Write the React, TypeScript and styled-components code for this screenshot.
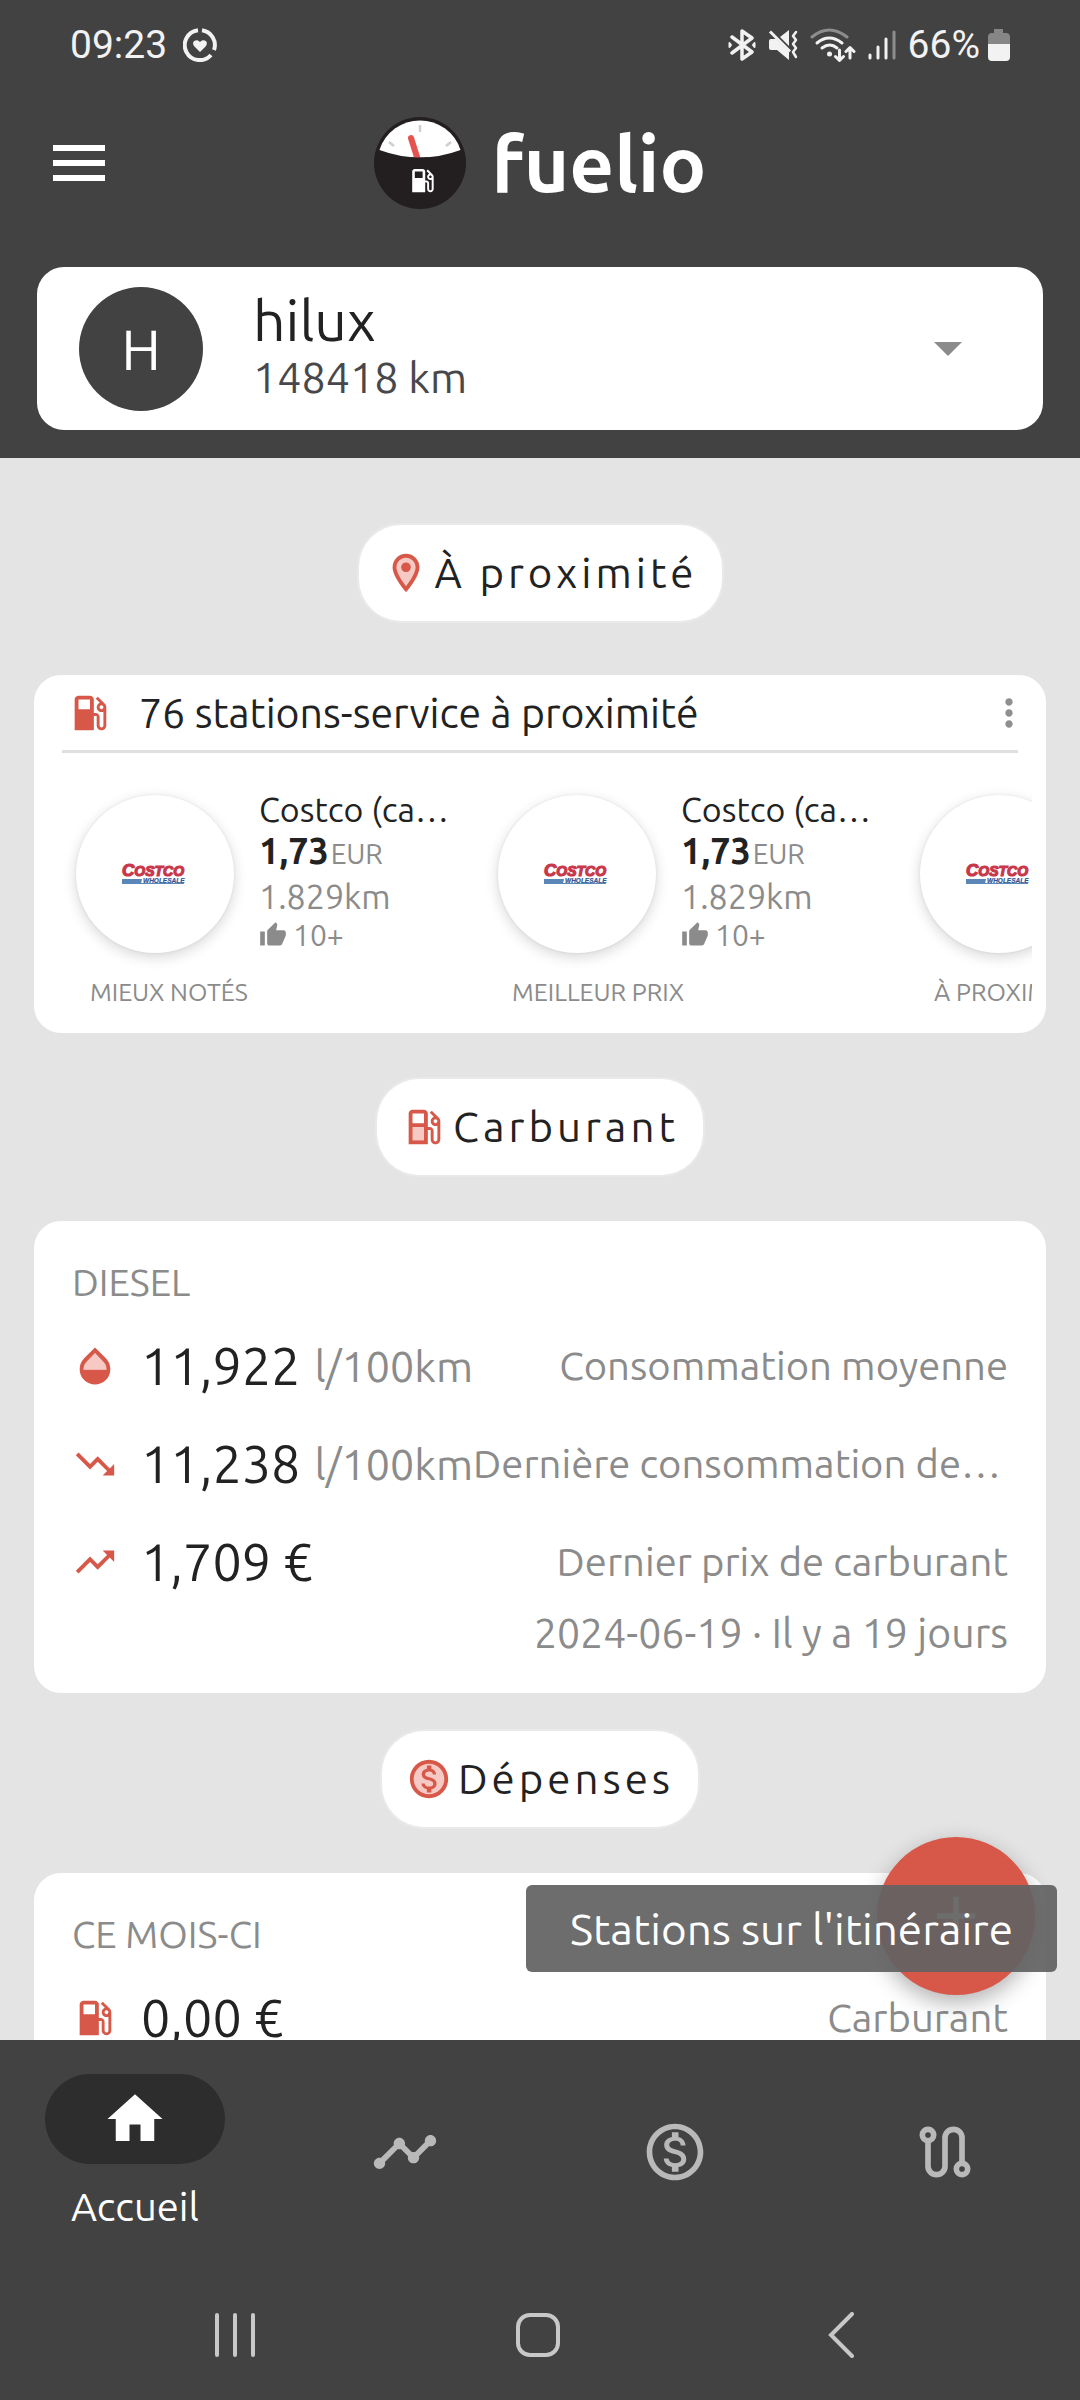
import React from "react";
import styled, { createGlobalStyle } from "styled-components";
import {
  MdAdd,
  MdHome,
  MdMoreVert,
  MdOutlineMonetizationOn,
  MdThumbUp,
  MdTimeline,
  MdTrendingDown,
  MdTrendingUp,
} from "react-icons/md";

const color = {
  dark: "#424242",
  darker: "#2d2d2d",
  page: "#e4e4e4",
  card: "#ffffff",
  ink: "#222222",
  muted: "#8b8b8b",
  accent: "#d75848",
  accentSoft: "#f6c9c4",
  navIcon: "#b9b9b9",
};

const GlobalStyle = createGlobalStyle`
  *, *::before, *::after { box-sizing: border-box; }
  body {
    margin: 0;
    background: ${color.dark};
    font-family: Ubuntu, "Noto Sans", "Open Sans", sans-serif;
    color: ${color.ink};
  }
  button { font: inherit; color: inherit; border: 0; padding: 0; background: none; cursor: pointer; }
  h1, h2, h3, p, ul { margin: 0; padding: 0; font-weight: 400; list-style: none; }
  svg { display: block; flex: none; }
`;

const Screen = styled.div`
  display: flex;
  flex-direction: column;
  height: 100vh;
  background: ${color.page};
`;

/* ---------- top ---------- */

const TopArea = styled.header`
  flex: none;
  padding-bottom: 28px;
  background: ${color.dark};
`;

const StatusBar = styled.div`
  display: flex;
  align-items: center;
  justify-content: space-between;
  height: 90px;
  padding: 0 70px;
  font-family: Roboto, sans-serif;
  font-size: 39px;
  line-height: 44px;
  color: #f2f2f2;
`;

const StatusGroup = styled.div<{ $gap: number }>`
  display: flex;
  align-items: center;
  gap: ${(p) => p.$gap}px;
`;

const Charge = styled.span`
  display: flex;
  align-items: center;
  gap: 8px;
`;

const TitleBar = styled.div`
  display: grid;
  grid-template-columns: 1fr auto 1fr;
  align-items: center;
  height: 146px;
  padding: 0 53px;
`;

const MenuButton = styled.button`
  justify-self: start;
`;

const Brand = styled.h1`
  display: flex;
  align-items: center;
  gap: 26px;
  font-size: 78px;
  line-height: 94px;
  font-weight: 700;
  color: #ffffff;
`;

const VehiclePicker = styled.button`
  display: flex;
  align-items: center;
  gap: 50px;
  width: calc(100% - 74px);
  height: 163px;
  margin: 31px 37px 0;
  padding: 0 81px 0 42px;
  border-radius: 27px;
  background: ${color.card};
  text-align: left;
`;

const Avatar = styled.span`
  display: grid;
  place-items: center;
  flex: none;
  width: 124px;
  height: 124px;
  border-radius: 50%;
  background: ${color.dark};
  font-size: 57px;
  line-height: 64px;
  color: #ffffff;
`;

const VehicleText = styled.span`
  display: flex;
  flex-direction: column;
  flex: 1;
  padding-bottom: 6px;
`;

const VehicleName = styled.span`
  font-size: 57px;
  line-height: 62px;
`;

const Odometer = styled.span`
  font-size: 43px;
  line-height: 52px;
  color: #48484c;
`;

/* ---------- content ---------- */

const Stage = styled.div`
  position: relative;
  flex: 1;
  min-height: 0;
`;

const Content = styled.main`
  height: 100%;
  overflow: hidden;
  padding: 67px 34px 0;
`;

const Section = styled.section<{ $gap: number; $after: number }>`
  display: flex;
  flex-direction: column;
  gap: ${(p) => p.$gap}px;
  margin-bottom: ${(p) => p.$after}px;
`;

const Chip = styled.h2`
  display: flex;
  align-items: center;
  align-self: center;
  gap: 6px;
  height: 96px;
  padding: 0 24px;
  border-radius: 42px;
  background: ${color.card};
  box-shadow: 0 0 0 2px #e9e9e9;
  font-size: 42px;
  line-height: 56px;
  letter-spacing: 4px;
`;

const Card = styled.div`
  border-radius: 27px;
  background: ${color.card};
`;

const NearbyHead = styled.div`
  display: flex;
  align-items: center;
  gap: 26px;
  height: 75px;
  padding: 0 15px 0 33px;
`;

const NearbyTitle = styled.h3`
  flex: 1;
  font-size: 41px;
  line-height: 52px;
`;

const Rule = styled.hr`
  height: 3px;
  margin: 0 28px;
  border: 0;
  background: #e0e0e0;
`;

const StationList = styled.ul`
  display: flex;
  margin: 0 14px;
  padding: 35px 0 19px 28px;
  overflow: hidden;
`;

const Station = styled.li`
  display: grid;
  grid-template-columns: 158px 196px;
  column-gap: 25px;
  flex: none;
  width: 422px;
`;

const StationBadge = styled.div`
  display: grid;
  place-items: center;
  width: 158px;
  height: 158px;
  margin-top: 7px;
  border-radius: 50%;
  background: ${color.card};
  box-shadow: 0 4px 14px rgba(0, 0, 0, 0.16), 0 0 3px rgba(0, 0, 0, 0.08);
`;

const StationInfo = styled.div`
  display: flex;
  flex-direction: column;
  font-size: 34px;
  line-height: 42px;
  color: ${color.muted};
`;

const StationName = styled.p`
  overflow: hidden;
  text-overflow: ellipsis;
  white-space: nowrap;
  color: ${color.ink};
`;

const Price = styled.p`
  display: flex;
  align-items: baseline;
  gap: 2px;
`;

const Amount = styled.strong`
  font-size: 36px;
  color: ${color.ink};
`;

const Currency = styled.span`
  font-size: 28px;
`;

const Likes = styled.p`
  display: flex;
  align-items: center;
  gap: 6px;
  font-size: 30px;
  line-height: 36px;
`;

const StationKind = styled.p`
  grid-column: 1 / -1;
  margin-top: 17px;
  padding-left: 14px;
  font-size: 25px;
  line-height: 44px;
  white-space: nowrap;
  color: ${color.muted};
`;

const StatsCard = styled(Card)`
  padding: 26px 38px 38px;
`;

const StatsTitle = styled.h3`
  font-size: 38px;
  line-height: 70px;
  color: ${color.muted};
`;

const StatRow = styled.div`
  display: flex;
  align-items: center;
  height: 98px;
`;

const StatValue = styled.span`
  display: flex;
  align-items: center;
  flex: none;
  gap: 14px;
  margin-left: 23px;
  font-size: 52px;
  line-height: 64px;
`;

const StatUnit = styled.span`
  font-size: 43px;
  color: ${color.muted};
`;

const StatLabel = styled.span`
  flex: 1;
  min-width: 0;
  overflow: hidden;
  text-overflow: ellipsis;
  white-space: nowrap;
  font-size: 40px;
  line-height: 52px;
  text-align: right;
  color: ${color.muted};
`;

const StatDate = styled.p`
  font-size: 41px;
  line-height: 44px;
  text-align: right;
  color: ${color.muted};
`;

const AddButton = styled.button`
  position: absolute;
  right: 45px;
  bottom: 45px;
  display: grid;
  place-items: center;
  width: 158px;
  height: 158px;
  border-radius: 50%;
  background: ${color.accent};
  color: #ffffff;
  box-shadow: 0 8px 22px rgba(0, 0, 0, 0.3);
`;

const Tooltip = styled.div`
  position: absolute;
  right: 23px;
  bottom: 68px;
  padding: 0 44px;
  border-radius: 6px;
  background: rgba(98, 98, 98, 0.93);
  font-size: 44px;
  line-height: 87px;
  white-space: nowrap;
  color: #ffffff;
`;

/* ---------- bottom ---------- */

const BottomArea = styled.footer`
  flex: none;
  background: ${color.dark};
`;

const Tabs = styled.nav`
  display: flex;
  height: 224px;
`;

const Tab = styled.a`
  display: flex;
  flex: 1;
  flex-direction: column;
  align-items: center;
  justify-content: center;
  gap: 20px;
  font-size: 40px;
  line-height: 46px;
  text-decoration: none;
  color: ${color.navIcon};

  &[aria-current="page"] {
    color: #ffffff;
  }
`;

const TabPill = styled.span`
  display: grid;
  place-items: center;
  width: 180px;
  height: 90px;
  border-radius: 45px;
  background: ${color.darker};
`;

const SystemBar = styled.div`
  display: flex;
  height: 136px;
  padding: 6px 88px 0 84px;
`;

const SystemButton = styled.button`
  display: grid;
  place-items: center;
  flex: 1;
`;

/* ---------- drawings ---------- */

const PUMP =
  "M19.77 7.23l.01-.01-3.72-3.72L15 4.56l2.11 2.11c-.94.36-1.61 1.26-1.61 2.33 0 1.38 1.12 2.5 2.5 2.5.36 0 .69-.08 1-.21v7.21c0 .55-.45 1-1 1s-1-.45-1-1V14c0-1.1-.9-2-2-2h-1V5c0-1.1-.9-2-2-2H6c-1.1 0-2 .9-2 2v16h10v-7.5h1.5v5c0 1.38 1.12 2.5 2.5 2.5s2.5-1.12 2.5-2.5V9c0-.69-.28-1.32-.73-1.77zM12 10H6V5h6v5zm6 0c-.55 0-1-.45-1-1s.45-1 1-1 1 .45 1 1-.45 1-1 1z";

const ICON = 46;

const PumpIcon = ({ twoTone = false }: { twoTone?: boolean }) => (
  <svg width={ICON} height={ICON} viewBox="0 0 24 24" fill={color.accent} aria-hidden>
    <path d={PUMP} />
    {twoTone && <path d="M6 12h6v7H6z" fill={color.accentSoft} />}
  </svg>
);

const PinIcon = () => (
  <svg width={ICON} height={ICON} viewBox="0 0 24 24" fill={color.accent} aria-hidden>
    <path d="M12 2C8.13 2 5 5.13 5 9c0 5.25 7 13 7 13s7-7.75 7-13c0-3.87-3.13-7-7-7z" />
    <path
      d="M12 4C9.24 4 7 6.24 7 9c0 2.85 2.92 7.21 5 9.88 2.11-2.69 5-7 5-9.88 0-2.76-2.24-5-5-5z"
      fill={color.accentSoft}
    />
    <circle cx="12" cy="9" r="2.5" />
  </svg>
);

const CoinIcon = () => (
  <svg width={ICON} height={ICON} viewBox="0 0 24 24" aria-hidden>
    <circle cx="12" cy="12" r="9" fill={color.accentSoft} />
    <MdOutlineMonetizationOn size={24} color={color.accent} />
  </svg>
);

const DropIcon = () => (
  <svg width={ICON} height={ICON} viewBox="0 0 24 24" fill={color.accent} aria-hidden>
    <path d="M6 14c0-2 .6-3.3 1.8-4.4L12 5.2l4.2 4.4C17.4 10.8 18 12 18 14z" fill={color.accentSoft} />
    <path d="M17.66 8L12 2.35 6.34 8C4.78 9.56 4 11.64 4 13.64s.78 4.11 2.34 5.67 3.61 2.35 5.66 2.35 4.1-.79 5.66-2.35S20 15.64 20 13.64 19.22 9.56 17.66 8zM6 14c.01-2 .62-3.27 1.76-4.4L12 5.27l4.24 4.38C17.38 10.77 17.99 12 18 14H6z" />
  </svg>
);

const RouteIcon = () => (
  <svg width="68" height="68" viewBox="0 0 24 24" fill="none" stroke="currentColor" strokeWidth="2" aria-hidden>
    <circle cx="6" cy="6" r="2" />
    <circle cx="18" cy="18" r="2" />
    <path d="M6 8v9a3 3 0 0 0 6 0V7a3 3 0 0 1 6 0v9" />
  </svg>
);

const MenuIcon = () => (
  <svg width="52" height="36" viewBox="0 0 52 36" fill="#ffffff" aria-hidden>
    <path d="M0 0h52v6H0zM0 15h52v6H0zM0 30h52v6H0z" />
  </svg>
);

const GaugeLogo = () => (
  <svg width="92" height="92" viewBox="0 0 92 92" aria-hidden>
    <circle cx="46" cy="46" r="46" fill="#231f20" />
    <path d="M5.500 33A42.500 42.500 0 0 1 86.500 33Q46 48 5.500 33z" fill="#ffffff" />
    <path d="M46 8v7M15 25l5 4M77 25l-5 4" stroke="#cfcfcf" strokeWidth="2.500" />
    <path d="M37 21l6 19" stroke="#e55350" strokeWidth="6" strokeLinecap="round" />
    <path d="M38 40.300q8 .6 16 0v4H38z" fill="#231f20" />
    <path d={PUMP} fill="#ffffff" transform="translate(33 48) scale(1.300)" />
  </svg>
);

const HealthIcon = () => (
  <svg width="34" height="34" viewBox="0 0 34 34" fill="none" stroke="#f2f2f2" strokeWidth="4" aria-hidden>
    <path d="M15 2.200A15 15 0 1 0 28 27" />
    <path d="M19 2.200A15 15 0 0 1 31 22" />
    <path
      d="M17 24l-6-6c-3-4 2-8 6-4 4-4 9 0 6 4z"
      fill="#f2f2f2"
      stroke="none"
    />
  </svg>
);

const BluetoothIcon = () => (
  <svg width="28" height="32" viewBox="0 0 28 32" fill="none" stroke="#f2f2f2" strokeWidth="3.500" strokeLinejoin="round" strokeLinecap="round" aria-hidden>
    <path d="M4 8l20 15-10 7V2l10 7L4 24" />
    <path d="M1.500 14v4l1.500-2zM26.500 14v4L25 16z" strokeWidth="2" />
  </svg>
);

const MuteIcon = () => (
  <svg width="30" height="30" viewBox="0 0 30 30" fill="#f2f2f2" aria-hidden>
    <path d="M1 11q0-2 2-2h5l13 13v8L9 20H3q-2 0-2-2zM12 7l9-7v16z" />
    <path d="M2 1.500l20 20" stroke="#f2f2f2" strokeWidth="3" />
    <path d="M28 2l-3 4 3 4-3 4 3 4-3 4 3 5" fill="none" stroke="#f2f2f2" strokeWidth="2.500" strokeLinejoin="round" strokeLinecap="round" />
  </svg>
);

const WifiIcon = () => (
  <svg width="46" height="34" viewBox="0 0 46 34" fill="none" stroke="#f2f2f2" strokeWidth="3" strokeLinecap="round" strokeLinejoin="round" aria-hidden>
    <path d="M2 9q17-14 35 0" stroke="#8d8d8d" />
    <path d="M7 15q12-10 25 0M12 20q8-6 15 0" />
    <circle cx="19.500" cy="26" r="2.500" fill="#f2f2f2" stroke="none" />
    <path d="M29.500 22v10M25.500 28.500l4 4 4-4M40 30V20M36 23.500l4-4 4 4" />
  </svg>
);

const SignalIcon = () => (
  <svg width="28" height="30" viewBox="0 0 28 30" strokeWidth="3" strokeLinecap="round" aria-hidden>
    <path d="M2 25v3M10 17v11M18 9v19" stroke="#f2f2f2" />
    <path d="M26 2v26" stroke="#8d8d8d" />
  </svg>
);

const BatteryIcon = () => (
  <svg width="22" height="32" viewBox="0 0 22 32" aria-hidden>
    <path d="M6 0h9v4h3q4 0 4 4v8H0V8q0-4 4-4h2z" fill="#868686" />
    <path d="M0 15h22v13q0 4-4 4H4q-4 0-4-4z" fill="#f2f2f2" />
  </svg>
);

const LogoText = styled.text`
  font-family: "Liberation Sans", sans-serif;
  font-weight: 700;
  font-style: italic;
`;

const CostcoLogo = () => (
  <svg width="68" height="22" viewBox="0 0 68 22" role="img" aria-label="Costco Wholesale">
    <LogoText x="1" y="13" fontSize="17" fill="#c8374a" stroke="#c8374a" strokeWidth="1.200">
      C<tspan fontSize="14">OSTCO</tspan>
    </LogoText>
    <path d="M1 16h20l-1 5H1z" fill="#5b87b8" />
    <path d="M20 20h43v1H20z" fill="#5b87b8" />
    <LogoText x="22" y="20" fontSize="6.500" fill="#2f5597" stroke="#2f5597" strokeWidth="0.200">
      WHOLESALE
    </LogoText>
  </svg>
);

/* ---------- data ---------- */

const stations = [
  { kind: "MIEUX NOTÉS", name: "Costco (carburant)", price: "1,73", distance: "1.829km", likes: "10+" },
  { kind: "MEILLEUR PRIX", name: "Costco (carburant)", price: "1,73", distance: "1.829km", likes: "10+" },
  { kind: "À PROXIMITÉ", name: "Costco (carburant)", price: "1,73", distance: "1.829km", likes: "10+" },
];

const fuelStats = [
  { icon: <DropIcon />, value: "11,922", unit: "l/100km", label: "Consommation moyenne" },
  {
    icon: <MdTrendingDown size={ICON} color={color.accent} />,
    value: "11,238",
    unit: "l/100km",
    label: "Dernière consommation de carburant",
  },
  {
    icon: <MdTrendingUp size={ICON} color={color.accent} />,
    value: "1,709 €",
    label: "Dernier prix de carburant",
  },
];

const Stat = ({ icon, value, unit, label }: { icon: React.ReactNode; value: string; unit?: string; label: string }) => (
  <StatRow>
    {icon}
    <StatValue>
      {value}
      {unit && <StatUnit>{unit}</StatUnit>}
    </StatValue>
    <StatLabel>{label}</StatLabel>
  </StatRow>
);

export default function App() {
  return (
    <Screen>
      <GlobalStyle />
      <TopArea>
        <StatusBar>
          <StatusGroup $gap={16}>
            <span>09:23</span>
            <HealthIcon />
          </StatusGroup>
          <StatusGroup $gap={12}>
            <BluetoothIcon />
            <MuteIcon />
            <WifiIcon />
            <SignalIcon />
            <Charge>
              66%
              <BatteryIcon />
            </Charge>
          </StatusGroup>
        </StatusBar>
        <TitleBar>
          <MenuButton aria-label="Menu">
            <MenuIcon />
          </MenuButton>
          <Brand>
            <GaugeLogo />
            fuelio
          </Brand>
        </TitleBar>
        <VehiclePicker aria-haspopup="listbox">
          <Avatar>H</Avatar>
          <VehicleText>
            <VehicleName>hilux</VehicleName>
            <Odometer>148418 km</Odometer>
          </VehicleText>
          <svg width="28" height="14" viewBox="0 0 28 14" fill={color.muted} aria-hidden>
            <path d="M0 0h28L14 14z" />
          </svg>
        </VehiclePicker>
      </TopArea>

      <Stage>
        <Content>
          <Section $gap={54} $after={46}>
            <Chip>
              <PinIcon />À proximité
            </Chip>
            <Card>
              <NearbyHead>
                <PumpIcon />
                <NearbyTitle>76 stations-service à proximité</NearbyTitle>
                <button aria-label="Plus d'options">
                  <MdMoreVert size={44} color="#8f8f8f" />
                </button>
              </NearbyHead>
              <Rule />
              <StationList>
                {stations.map((s) => (
                  <Station key={s.kind}>
                    <StationBadge>
                      <CostcoLogo />
                    </StationBadge>
                    <StationInfo>
                      <StationName>{s.name}</StationName>
                      <Price>
                        <Amount>{s.price}</Amount>
                        <Currency>EUR</Currency>
                      </Price>
                      <p>{s.distance}</p>
                      <Likes>
                        <MdThumbUp size={28} />
                        {s.likes}
                      </Likes>
                    </StationInfo>
                    <StationKind>{s.kind}</StationKind>
                  </Station>
                ))}
              </StationList>
            </Card>
          </Section>

          <Section $gap={46} $after={38}>
            <Chip>
              <PumpIcon twoTone />
              Carburant
            </Chip>
            <StatsCard>
              <StatsTitle>DIESEL</StatsTitle>
              {fuelStats.map((s) => (
                <Stat key={s.label} {...s} />
              ))}
              <StatDate>2024-06-19 · Il y a 19 jours</StatDate>
            </StatsCard>
          </Section>

          <Section $gap={46} $after={0}>
            <Chip>
              <CoinIcon />
              Dépenses
            </Chip>
            <StatsCard>
              <StatsTitle>CE MOIS-CI</StatsTitle>
              <Stat icon={<PumpIcon />} value="0,00 €" label="Carburant" />
            </StatsCard>
          </Section>
        </Content>
        <AddButton aria-label="Ajouter" aria-describedby="fab-tip">
          <MdAdd size={66} />
        </AddButton>
        <Tooltip id="fab-tip" role="tooltip">
          Stations sur l'itinéraire
        </Tooltip>
      </Stage>

      <BottomArea>
        <Tabs>
          <Tab href="#accueil" aria-current="page">
            <TabPill>
              <MdHome size={66} />
            </TabPill>
            Accueil
          </Tab>
          <Tab href="#chronologie" aria-label="Chronologie">
            <MdTimeline size={68} />
          </Tab>
          <Tab href="#depenses" aria-label="Dépenses">
            <MdOutlineMonetizationOn size={68} />
          </Tab>
          <Tab href="#trajets" aria-label="Trajets">
            <RouteIcon />
          </Tab>
        </Tabs>
        <SystemBar>
          <SystemButton aria-label="Applications récentes">
            <svg width="40" height="44" viewBox="0 0 40 44" stroke="#c8c8c8" strokeWidth="4" strokeLinecap="round" aria-hidden>
              <path d="M2 2v40M20 2v40M38 2v40" />
            </svg>
          </SystemButton>
          <SystemButton aria-label="Écran d'accueil">
            <svg width="44" height="44" viewBox="0 0 44 44" fill="none" stroke="#c8c8c8" strokeWidth="4" aria-hidden>
              <rect x="2" y="2" width="40" height="40" rx="12" />
            </svg>
          </SystemButton>
          <SystemButton aria-label="Retour">
            <svg width="26" height="46" viewBox="0 0 26 46" fill="none" stroke="#c8c8c8" strokeWidth="4" strokeLinecap="round" aria-hidden>
              <path d="M24 2L3 23l21 21" />
            </svg>
          </SystemButton>
        </SystemBar>
      </BottomArea>
    </Screen>
  );
}
